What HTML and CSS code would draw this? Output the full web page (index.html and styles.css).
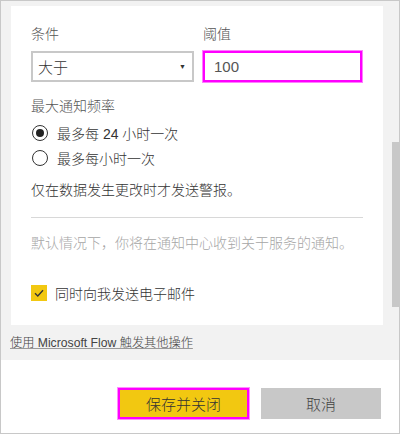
FILE: index.html
```html
<!DOCTYPE html>
<html lang="zh-CN">
<head>
<meta charset="utf-8">
<link rel="stylesheet" href="styles.css">
</head>
<body>
<div class="dialog">
  <div class="scroll-area">
    <div class="card">
      <div class="fields">
        <div class="field field-cond">
          <div class="label">条件</div>
          <div class="select"><span>大于</span><span class="arrow">▼</span></div>
        </div>
        <div class="field field-thr">
          <div class="label">阈值</div>
          <div class="input">100</div>
        </div>
      </div>
      <div class="label freq">最大通知频率</div>
      <div class="radio-row">
        <span class="radio checked"></span><span>最多每 24 小时一次</span>
      </div>
      <div class="radio-row">
        <span class="radio"></span><span>最多每小时一次</span>
      </div>
      <p class="info">仅在数据发生更改时才发送警报。</p>
      <div class="divider"></div>
      <p class="muted">默认情况下，你将在通知中心收到关于服务的通知。</p>
      <div class="check-row">
        <span class="checkbox"><svg width="12" height="10" viewBox="0 0 12 10"><path d="M2 5.2 L4.8 8 L10 2.2" fill="none" stroke="#333" stroke-width="1.3"/></svg></span>
        <span>同时向我发送电子邮件</span>
      </div>
    </div>
    <a class="flow-link" href="#">使用 Microsoft Flow 触发其他操作</a>
    <div class="scrollbar"></div>
  </div>
  <div class="footer">
    <button class="btn btn-primary">保存并关闭</button>
    <button class="btn btn-secondary">取消</button>
  </div>
</div>
</body>
</html>
```
FILE: styles.css
```css
* { box-sizing: border-box; }
html, body { margin: 0; padding: 0; background: #fff; }
body {
  font-family: "Liberation Sans", "Noto Sans CJK SC", sans-serif;
  font-size: 14px;
  font-weight: 300;
  color: #333;
}
.dialog {
  width: 400px;
  height: 434px;
  border: 1px solid #c8c8c8;
  display: flex;
  flex-direction: column;
}
.scroll-area {
  position: relative;
  background: #f2f2f2;
  height: 359px;
  padding: 5px 0 0 9px;
}
.card {
  background: #fff;
  width: 372px;
  margin-left: 1px;
  height: 319px;
  padding: 18px 20px 0 20px;
}
.fields { display: flex; gap: 9px; }
.field-cond { width: 163px; }
.field-thr { width: 159px; }
.label {
  color: #555;
  line-height: 20px;
  height: 20px;
}
.select {
  margin-top: 7px;
  height: 31px;
  border: 2px solid #c8c8c8;
  display: flex;
  align-items: center;
  justify-content: space-between;
  padding: 0 6px 0 5px;
  font-size: 15px;
  color: #333;
}
.arrow { font-size: 7px; color: #333; font-weight: 400; }
.input {
  margin-top: 7px;
  height: 31px;
  border: 2px solid #ff00ff;
  box-shadow: 0 0 0 1px #ff7dff;
  display: flex;
  align-items: center;
  padding-left: 9px;
  font-size: 15px;
  color: #555;
}
.freq { margin-top: 14px; }
.radio-row {
  height: 25px;
  display: flex;
  align-items: center;
  gap: 9px;
  color: #333;
}
.freq + .radio-row { margin-top: 4px; }
.radio {
  width: 16px;
  height: 16px;
  border: 1.3px solid #333;
  border-radius: 50%;
  display: flex;
  align-items: center;
  justify-content: center;
  margin-left: 1px;
}
.radio.checked::after {
  content: "";
  width: 8px;
  height: 8px;
  border-radius: 50%;
  background: #222;
}
.info {
  margin: 10px 0 0;
  line-height: 20px;
  color: #333;
}
.divider {
  margin-top: 17px;
  height: 1px;
  background: #d8d8d8;
}
.muted {
  margin: 15px 0 0;
  line-height: 20px;
  color: #a6a6a6;
}
.check-row {
  margin-top: 30px;
  height: 20px;
  display: flex;
  align-items: center;
  gap: 8px;
  color: #333;
}
.checkbox {
  width: 16px;
  height: 16px;
  background: #f2c811;
  display: flex;
  align-items: center;
  justify-content: center;
}
.flow-link {
  display: block;
  margin-top: 8px;
  line-height: 20px;
  font-size: 12.2px;
  color: #444;
  text-decoration: underline;
  text-decoration-color: #999;
  width: max-content;
}
.scrollbar {
  position: absolute;
  right: 0;
  top: 141px;
  width: 7px;
  height: 165px;
  background: #c8c8c8;
}
.footer {
  flex: 1;
  display: flex;
  justify-content: flex-end;
  align-items: flex-start;
  gap: 12px;
  padding: 28px 18px 0 0;
}
.btn {
  height: 31px;
  border: none;
  font-family: "Noto Sans CJK SC", sans-serif;
  font-size: 15px;
  font-weight: 300;
  color: #333;
  padding: 0;
}
.btn-primary {
  width: 131px;
  background: #f2c811;
  border: 2px solid #ff00ff;
  box-shadow: 0 0 0 1px #ff8cff;
}
.btn-secondary {
  width: 120px;
  background: #c8c8c8;
  color: #444;
}
```
